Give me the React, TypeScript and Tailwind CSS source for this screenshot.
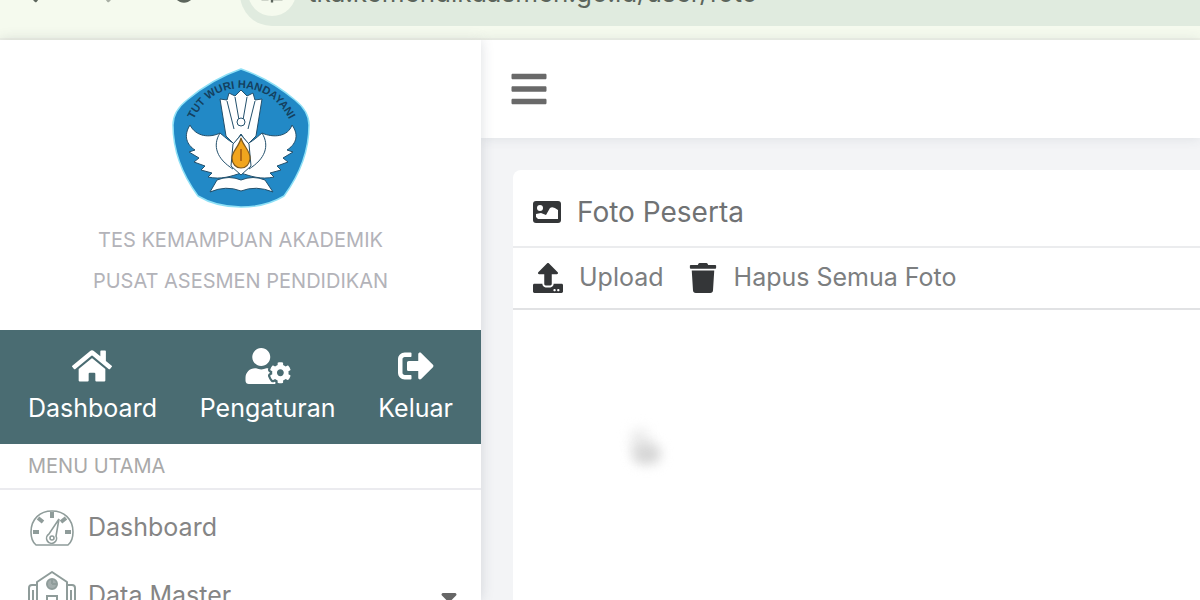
import React from 'react';
import { FaHome, FaUserCog, FaSignOutAlt, FaUpload, FaTrash, FaBars, FaArrowLeft, FaArrowRight } from 'react-icons/fa';
import { FaCaretDown } from 'react-icons/fa6';
import { MdRefresh, MdTune } from 'react-icons/md';

const Logo = () => (
  <svg viewBox="0 0 138 140" className="h-[140px] w-[138px]" role="img" aria-label="Tut Wuri Handayani">
    <defs>
      <path id="motto" d="M19 57 Q34 21 69 20 Q104 21 120 57" />
    </defs>
    <path d="M69 1 Q98 11 123 32 Q137 43 137 57 Q137 94 112 128 Q94 139 69 139 Q44 139 26 128 Q1 94 1 57 Q1 43 15 32 Q40 11 69 1 Z" fill="#2289c6" stroke="#8ee0f6" strokeWidth="1.5" />
    <text fill="#14405e" fontSize="11" fontWeight="700" fontFamily="Liberation Sans, sans-serif">
      <textPath href="#motto" startOffset="50%" textAnchor="middle">TUT WURI HANDAYANI</textPath>
    </text>
    <g fill="#fff" stroke="#23506c" strokeWidth="1" strokeLinejoin="round">
      {/* wings */}
      <path d="M18 57 C24 69 38 70 48 65 C54 70 60 76 69 78 C78 76 84 70 90 65 C101 70 116 69 120 57 C128 68 123 77 115 82 L121 84 L111 90 L116 94 L105 98 L109 102 L98 105 L102 109 C89 112 78 108 69 105 C60 108 49 112 36 109 L40 105 L29 102 L33 98 L22 94 L27 90 L17 84 L23 82 C15 77 11 68 18 57 Z" />
      {/* tail feathers */}
      <path d="M48 31 L55 32 L57 25 L63 28 L69 22 L75 28 L81 25 L83 32 L90 31 L84 68 L76 76 L69 66 L62 76 L54 68 Z" />
      <path d="M55 33 L62 61 M63 29 L67 52 M75 29 L71 52 M83 33 L76 61" fill="none" />
      <circle cx="69" cy="54" r="4" />
      <path d="M48 65 C40 78 45 91 61 101 M90 65 C98 78 93 91 77 101" fill="none" />
      <path d="M61 76 L69 67 L77 76 L79 98 L69 107 L59 98 Z" />
      {/* book */}
      <path d="M45 112 Q57 107 69 112 Q81 107 93 112 L101 124 Q84 117 69 123 Q54 117 38 124 Z" />
    </g>
    <path d="M69 70 C71 78 79 83 78 91 C77 97 74 100 69 100 C64 100 60 96 60 90 C60 83 67 79 69 70 Z" fill="#f1a51e" stroke="#7b581f" strokeWidth="1.2" />
    <path d="M69 81 V93" stroke="#b56a13" strokeWidth="2" />
  </svg>
);

const ImageIcon = () => (
  <svg viewBox="0 0 28 24" className="h-6 w-7 shrink-0" aria-hidden="true">
    <rect x="0" y="1" width="28" height="22" rx="3" fill="#343638" />
    <circle cx="7" cy="8" r="3" fill="#fff" />
    <path d="M3 17 V14 L8 13 L13 15 L17 8 Q20 6 25 10 V19 H5 Z" fill="#fff" />
  </svg>
);

const GaugeIcon = () => (
  <svg viewBox="0 0 44 38" className="h-[38px] w-12 shrink-0" fill="none" stroke="#8f9c9a" strokeWidth="1.6" aria-hidden="true">
    <path d="M6 36 Q1 32 1 23 C1 10 10 2 22 2 C34 2 43 10 43 23 Q43 32 38 36 Z" strokeLinejoin="round" />
    <path d="M22 3 V9 M8 9 L13 13 M3 23 H9 M35 23 H41 M31 13 L36 9" strokeWidth="4" />
    <path d="M29 10 L19 25 A5 5 0 1 0 26 27 Z" />
    <circle cx="22" cy="29" r="2" />
  </svg>
);

const ServerIcon = () => (
  <svg viewBox="0 0 48 52" className="h-[52px] w-12 shrink-0" fill="none" stroke="#8f9c9a" strokeWidth="2" aria-hidden="true">
    <path d="M9 50 V12 L24 2 L39 12 V50 Z" strokeLinejoin="round" />
    <path d="M9 15 H4 Q1 15 1 18 V50 M39 15 H44 Q47 15 47 18 V50 M5 20 V50 M43 20 V50" />
    <circle cx="24" cy="14" r="5" fill="#a3adac" />
    <path d="M24 14 V9 M24 14 H29 M19 26 H29 V50 H19 Z" />
  </svg>
);

const quickLinks = [
  { label: 'Dashboard', icon: <FaHome className="h-10 w-10" /> },
  { label: 'Pengaturan', icon: <FaUserCog className="h-9 w-12" /> },
  { label: 'Keluar', icon: <FaSignOutAlt className="h-9 w-9" /> },
];

const BrowserBar = () => (
  <header className="flex h-10 shrink-0 items-end overflow-hidden border-b-2 border-[#eff2e8] bg-[#f5faee] text-[#5c655c]">
    <div className="flex h-16 w-60 shrink-0 items-center justify-between pr-10 pb-7 pl-6">
      <button aria-label="Back"><FaArrowLeft className="size-6" /></button>
      <button aria-label="Forward" className="text-[#a9afa5]"><FaArrowRight className="size-6" /></button>
      <button aria-label="Reload"><MdRefresh className="size-8" /></button>
    </div>
    <div className="mb-3 flex h-16 flex-1 items-center rounded-l-full bg-[#e0ebdf] pb-1 pl-2">
      <button aria-label="Site information" className="flex size-12 items-center justify-center rounded-full bg-[#f5faee]">
        <MdTune className="size-7" />
      </button>
      <input
        aria-label="Address"
        defaultValue="tka.kemendikdasmen.go.id/user/foto"
        className="ml-3 min-w-0 flex-1 bg-transparent text-[26px] outline-none"
      />
    </div>
  </header>
);

const Sidebar = () => (
  <aside className="z-10 w-[481px] shrink-0 bg-white shadow-[0_0_12px_rgba(60,70,90,0.18)]">
    <div className="flex flex-col items-center pt-7 pb-7 text-[20px] leading-[41px] text-[#b3b3b9]">
      <Logo />
      <p className="mt-3">TES KEMAMPUAN AKADEMIK</p>
      <p>PUSAT ASESMEN PENDIDIKAN</p>
    </div>
    <nav className="flex h-[114px] justify-between bg-[#4a6c72] px-7 pt-4 text-[25px] text-white">
      {quickLinks.map((link) => (
        <a key={link.label} href="#" className="flex flex-col items-center">
          <span className="flex h-10 items-center">{link.icon}</span>
          <span className="leading-[44px]">{link.label}</span>
        </a>
      ))}
    </nav>
    <h2 className="h-[46px] border-b-2 border-[#ebebef] px-7 text-[20px] leading-[44px] text-[#a9a9a9]">MENU UTAMA</h2>
    <ul className="text-[25px] text-[#858585]">
      <li>
        <a href="#" className="flex h-[76px] items-center gap-3 px-7">
          <GaugeIcon />
          Dashboard
        </a>
      </li>
      <li>
        <a href="#" className="flex h-[60px] items-center gap-3 pr-5 pl-7">
          <ServerIcon />
          <span className="flex-1">Data Master</span>
          <FaCaretDown className="size-6 text-[#666]" />
        </a>
      </li>
    </ul>
  </aside>
);

export default function App() {
  return (
    <div className="flex h-screen flex-col overflow-hidden bg-white font-['Inter',sans-serif]">
      <BrowserBar />
      <div className="flex min-h-0 flex-1">
        <Sidebar />
        <main className="flex min-w-0 flex-1 flex-col bg-[#f3f4f6]">
          <div className="flex h-[98px] shrink-0 items-center bg-white px-7 shadow-[0_0_12px_rgba(60,70,90,0.12)]">
            <button aria-label="Toggle menu" className="text-[#696969]"><FaBars className="size-10" /></button>
          </div>
          <section className="mt-8 ml-8 flex flex-1 flex-col rounded-tl-lg bg-white">
            <h1 className="flex h-[78px] items-center gap-4 border-b-2 border-[#ebecee] px-5 pt-2 text-[28px] text-[#707274]">
              <ImageIcon />
              Foto Peserta
            </h1>
            <div className="flex h-[62px] items-center gap-6 border-b-2 border-[#e1e2e4] px-5 text-[25px] text-[#7c7e80]">
              <button className="flex items-center gap-4">
                <FaUpload className="size-[30px] text-[#343638]" />
                Upload
              </button>
              <button className="flex items-center gap-4">
                <FaTrash className="size-[30px] text-[#343638]" />
                Hapus Semua Foto
              </button>
            </div>
            <div className="relative flex-1">
              <div className="absolute top-[118px] left-[118px] h-8 w-5 -rotate-12 rounded-full bg-[#ededed] blur-[6px]" />
              <div className="absolute top-[134px] left-[120px] h-5 w-7 rounded-full bg-[#d6d6d6] blur-[6px]" />
            </div>
          </section>
        </main>
      </div>
    </div>
  );
}
